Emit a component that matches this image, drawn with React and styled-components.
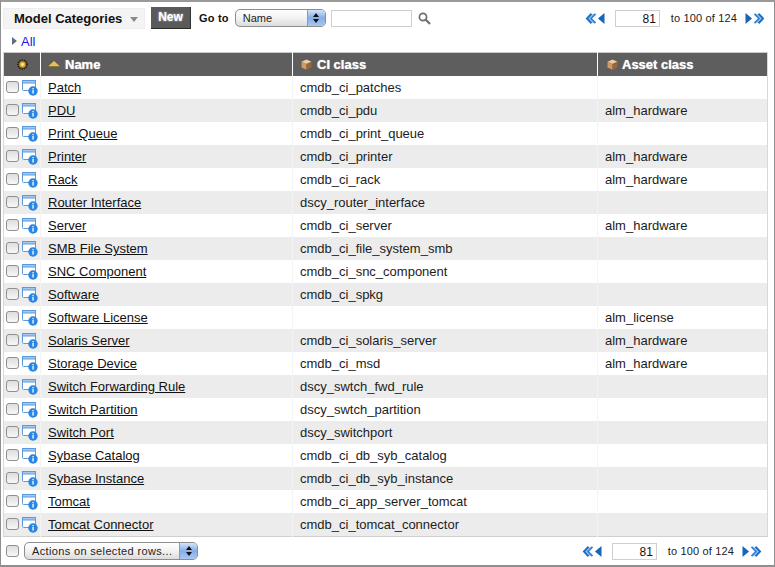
import React from 'react'
import styled, { createGlobalStyle } from 'styled-components'

const GlobalStyle = createGlobalStyle`
  html, body { margin: 0; padding: 0; background: #fff; }
  body { font-family: "Liberation Sans", Arial, sans-serif; font-size: 13px; color: #000; }
`

const Frame = styled.div`
  width: 775px;
  height: 567px;
  box-sizing: border-box;
  border: 1px solid #8f8f8f;
  border-top: 2px solid #9a9a9a;
  border-bottom: 2px solid #8f8f8f;
  padding: 0 6px 0 2px;
  overflow: hidden;
  background: #fff;
`

const Toolbar = styled.div`
  display: flex;
  align-items: center;
  box-sizing: border-box;
  height: 32px;
  padding: 0 3px 0 0;
`

const TitleMenu = styled.div`
  display: flex;
  align-items: center;
  gap: 8px;
  width: 142px;
  height: 21px;
  box-sizing: border-box;
  padding-left: 10px;
  background: #f4f4f4;
  border: 1px solid #eeeeee;
  font-size: 13px;
  font-weight: bold;
  color: #111;
  white-space: nowrap;
`

const Caret = styled.span`
  width: 0;
  height: 0;
  margin-top: 3px;
  border-left: 4px solid transparent;
  border-right: 4px solid transparent;
  border-top: 5px solid #8a8a8a;
`

const NewButton = styled.div`
  margin-left: 6px;
  width: 40px;
  height: 22px;
  box-sizing: border-box;
  background: #5a5a5a;
  border-bottom: 1px solid #2a2a2a;
  border-right: 1px solid #333;
  color: #fff;
  font-size: 12px;
  font-weight: bold;
  line-height: 20px;
  text-align: center;
  text-shadow: 0 0 2px #ddd;
`

const GoLabel = styled.span`
  margin-left: 8px;
  font-size: 11px;
  font-weight: bold;
  letter-spacing: 0.2px;
  color: #111;
  white-space: nowrap;
`

const SelectBox = styled.div`
  display: flex;
  align-items: center;
  justify-content: space-between;
  box-sizing: border-box;
  height: ${p => p.$h}px;
  width: ${p => p.$w}px;
  margin-left: ${p => p.$ml || 0}px;
  padding-left: ${p => p.$pl}px;
  border: 1px solid #8d8d8d;
  border-radius: 5px;
  background: linear-gradient(#ffffff, #f2f2f2 50%, #dcdcdc);
  font-size: 11px;
  letter-spacing: ${p => p.$ls || 0}px;
  color: #222;
  white-space: nowrap;
  overflow: hidden;
`

const Stepper = styled.span`
  display: flex;
  flex-direction: column;
  align-items: center;
  justify-content: center;
  gap: 2px;
  width: 17px;
  height: 100%;
  background: linear-gradient(#d4e3f8, #86aee6 50%, #a9c8f2);
  border-left: 1px solid #7f9dc7;
`

const StepUp = styled.i`
  width: 0; height: 0;
  border-left: 3px solid transparent;
  border-right: 3px solid transparent;
  border-bottom: 4px solid #111;
`

const StepDown = styled(StepUp)`
  border-bottom: 0;
  border-top: 4px solid #111;
`

const SearchInput = styled.div`
  box-sizing: border-box;
  width: 81px;
  height: 17px;
  margin-left: 5px;
  border: 1px solid #cfcfcf;
  background: #fff;
`

const SearchIcon = styled.svg`
  margin-left: 6px;
  width: 13px;
  height: 13px;
`

const Pager = styled.div`
  display: flex;
  align-items: center;
  margin-left: auto;
  font-size: 11px;
  color: #222;
`

const PageInput = styled.div`
  box-sizing: border-box;
  width: 45px;
  height: 17px;
  margin: 0 11px 0 10px;
  border: 1px solid #cfcfcf;
  font-size: 12px;
  line-height: 16px;
  text-align: right;
  padding-right: 3px;
  color: #111;
`

const PagerText = styled.span`
  margin-right: 8px;
  letter-spacing: 0.15px;
  white-space: nowrap;
`

const BreadRow = styled.div`
  display: flex;
  align-items: center;
  gap: 4px;
  height: 18px;
  padding: 0 0 4px 9px;
  box-sizing: border-box;
  font-size: 13px;
  color: #1a1ae0;
`

const BreadArrow = styled.span`
  width: 0; height: 0;
  border-top: 4px solid transparent;
  border-bottom: 4px solid transparent;
  border-left: 5px solid #5f6f80;
`

const Table = styled.table`
  width: 765px;
  border-collapse: collapse;
  table-layout: fixed;
  border-top: 1px solid #c8c8c8;
  border-bottom: 1px solid #cfcfcf;
  border-left: 1px solid #d8d8d8;
  border-right: 1px solid #d8d8d8;
`

const HeadCell = styled.th`
  height: 21px;
  padding: 0 0 2px ${p => p.$pl || 0}px;
  background: #5e5e5e;
  border-left: ${p => (p.$first ? 'none' : '1px solid #fff')};
  color: #fff;
  font-size: 13px;
  font-weight: bold;
  text-align: ${p => (p.$center ? 'center' : 'left')};
  text-shadow: 0 0 1px #eee;
  white-space: nowrap;
`

const HeadInner = styled.span`
  display: inline-flex;
  align-items: center;
  gap: ${p => p.$gap}px;
  vertical-align: middle;
`

const Row = styled.tr`
  background: ${p => (p.$odd ? '#ececec' : '#fff')};
`

const Cell = styled.td`
  height: 23px;
  padding: 0 0 0 ${p => p.$pl}px;
  border-left: ${p => (p.$first ? 'none' : '1px solid #f4f4f4')};
  font-size: 13px;
  color: #1c1c1c;
  white-space: nowrap;
`

const Check = styled.span`
  display: inline-block;
  box-sizing: border-box;
  width: 13px;
  height: 12px;
  flex: none;
  border: 1px solid #8f8f8f;
  border-radius: 3px;
  background: linear-gradient(#dedede, #f8f8f8);
`

const IconCell = styled.div`
  display: flex;
  align-items: flex-start;
  gap: 3px;
  padding: 1px 0 0 2px;

  ${Check} {
    margin-top: 1px;
  }
`

const NameLink = styled.a`
  color: #111;
  text-decoration: underline;
`

const Footer = styled.div`
  display: flex;
  align-items: center;
  height: 28px;
  padding: 0 6px 0 3px;
`

const Prev = () => (
  <svg width="20" height="11" viewBox="0 0 20 11">
    <path d="M6.5 1 L2 5.5 L6.5 10 L10.5 10 L6 5.5 L10.5 1 Z" fill="#a9cdf2" />
    <path d="M6.5 0.8 L2 5.5 L6.5 10.2" fill="none" stroke="#1f6fc4" strokeWidth="2" />
    <path d="M10.5 0.8 L6 5.5 L10.5 10.2" fill="none" stroke="#2f80d4" strokeWidth="1.8" />
    <path d="M19.5 0 L13 5.5 L19.5 11 Z" fill="#1765b8" />
  </svg>
)

const Next = () => (
  <svg width="20" height="11" viewBox="0 0 20 11">
    <path d="M0.5 0 L7 5.5 L0.5 11 Z" fill="#1765b8" />
    <path d="M13.5 1 L18 5.5 L13.5 10 L9.5 10 L14 5.5 L9.5 1 Z" fill="#a9cdf2" />
    <path d="M13.5 0.8 L18 5.5 L13.5 10.2" fill="none" stroke="#1f6fc4" strokeWidth="2" />
    <path d="M9.5 0.8 L14 5.5 L9.5 10.2" fill="none" stroke="#2f80d4" strokeWidth="1.8" />
  </svg>
)

const Cube = () => (
  <svg width="11" height="11" viewBox="0 0 11 11">
    <path d="M5.5 0.5 L10.5 2.8 L5.5 5 L0.5 2.8 Z" fill="#edcba4" />
    <path d="M0.5 2.8 L5.5 5 L5.5 10.8 L0.5 8.5 Z" fill="#d29a62" />
    <path d="M10.5 2.8 L5.5 5 L5.5 10.8 L10.5 8.5 Z" fill="#9a6636" />
  </svg>
)

const Gear = () => (
  <svg width="11" height="11" viewBox="0 0 11 11">
    <circle cx="5.5" cy="5.5" r="4.5" fill="none" stroke="#1d1a10" strokeWidth="1.6" strokeDasharray="1.2 1" />
    <circle cx="5.5" cy="5.5" r="3" fill="#e0a92c" />
    <circle cx="5.5" cy="5.5" r="1.4" fill="#f5e6a8" />
  </svg>
)

const SortArrow = () => (
  <svg width="12" height="6" viewBox="0 0 12 6">
    <path d="M6 0 L11.5 5 L0.5 5 Z" fill="#e9c14e" />
    <path d="M0.5 5 L11.5 5 L11.5 6 L0.5 6 Z" fill="#8a7a3a" />
  </svg>
)

const InfoIcon = () => (
  <svg width="16" height="16" viewBox="0 0 16 16" style={{ flex: 'none' }}>
    <rect x="0.5" y="0.5" width="13" height="10" rx="1" fill="#fff" stroke="#5c9ade" />
    <rect x="0.5" y="0.5" width="13" height="2.5" fill="#a3c8f0" stroke="#5c9ade" />
    <circle cx="11" cy="11" r="4.7" fill="#2a86e4" />
    <rect x="10.4" y="10" width="1.3" height="3.6" fill="#fff" />
    <rect x="10.4" y="8" width="1.3" height="1.3" fill="#fff" />
  </svg>
)

const rows = [
  ['Patch', 'cmdb_ci_patches', ''],
  ['PDU', 'cmdb_ci_pdu', 'alm_hardware'],
  ['Print Queue', 'cmdb_ci_print_queue', ''],
  ['Printer', 'cmdb_ci_printer', 'alm_hardware'],
  ['Rack', 'cmdb_ci_rack', 'alm_hardware'],
  ['Router Interface', 'dscy_router_interface', ''],
  ['Server', 'cmdb_ci_server', 'alm_hardware'],
  ['SMB File System', 'cmdb_ci_file_system_smb', ''],
  ['SNC Component', 'cmdb_ci_snc_component', ''],
  ['Software', 'cmdb_ci_spkg', ''],
  ['Software License', '', 'alm_license'],
  ['Solaris Server', 'cmdb_ci_solaris_server', 'alm_hardware'],
  ['Storage Device', 'cmdb_ci_msd', 'alm_hardware'],
  ['Switch Forwarding Rule', 'dscy_swtch_fwd_rule', ''],
  ['Switch Partition', 'dscy_swtch_partition', ''],
  ['Switch Port', 'dscy_switchport', ''],
  ['Sybase Catalog', 'cmdb_ci_db_syb_catalog', ''],
  ['Sybase Instance', 'cmdb_ci_db_syb_instance', ''],
  ['Tomcat', 'cmdb_ci_app_server_tomcat', ''],
  ['Tomcat Connector', 'cmdb_ci_tomcat_connector', ''],
]

const PagerBlock = () => (
  <Pager>
    <Prev />
    <PageInput>81</PageInput>
    <PagerText>to 100 of 124</PagerText>
    <Next />
  </Pager>
)

export default function App() {
  return (
    <Frame>
      <GlobalStyle />
      <Toolbar>
        <TitleMenu>Model Categories<Caret /></TitleMenu>
        <NewButton>New</NewButton>
        <GoLabel>Go to</GoLabel>
        <SelectBox $w={91} $h={18} $ml={6} $pl={7}>
          Name
          <Stepper><StepUp /><StepDown /></Stepper>
        </SelectBox>
        <SearchInput />
        <SearchIcon viewBox="0 0 13 13">
          <circle cx="5" cy="5" r="3.6" fill="none" stroke="#6f6f6f" strokeWidth="1.7" />
          <path d="M7.8 7.8 L12 12" stroke="#6f6f6f" strokeWidth="2.2" />
        </SearchIcon>
        <PagerBlock />
      </Toolbar>
      <BreadRow><BreadArrow />All</BreadRow>
      <Table>
        <colgroup>
          <col style={{ width: 37 }} />
          <col style={{ width: 252 }} />
          <col style={{ width: 305 }} />
          <col />
        </colgroup>
        <thead>
          <tr>
            <HeadCell $first $center><HeadInner $gap={0}><Gear /></HeadInner></HeadCell>
            <HeadCell $pl={7}><HeadInner $gap={5}><SortArrow />Name</HeadInner></HeadCell>
            <HeadCell $pl={8}><HeadInner $gap={5}><Cube />CI class</HeadInner></HeadCell>
            <HeadCell $pl={9}><HeadInner $gap={4}><Cube />Asset class</HeadInner></HeadCell>
          </tr>
        </thead>
        <tbody>
          {rows.map(([name, ci, asset], i) => (
            <Row key={name} $odd={i % 2 === 1}>
              <Cell $first $pl={0}>
                <IconCell><Check /><InfoIcon /></IconCell>
              </Cell>
              <Cell $pl={7}><NameLink>{name}</NameLink></Cell>
              <Cell $pl={7}>{ci}</Cell>
              <Cell $pl={7}>{asset}</Cell>
            </Row>
          ))}
        </tbody>
      </Table>
      <Footer>
        <Check />
        <SelectBox $w={174} $h={18} $ml={5} $pl={7} $ls={0.35}>
          Actions on selected rows...
          <Stepper><StepUp /><StepDown /></Stepper>
        </SelectBox>
        <PagerBlock />
      </Footer>
    </Frame>
  )
}
